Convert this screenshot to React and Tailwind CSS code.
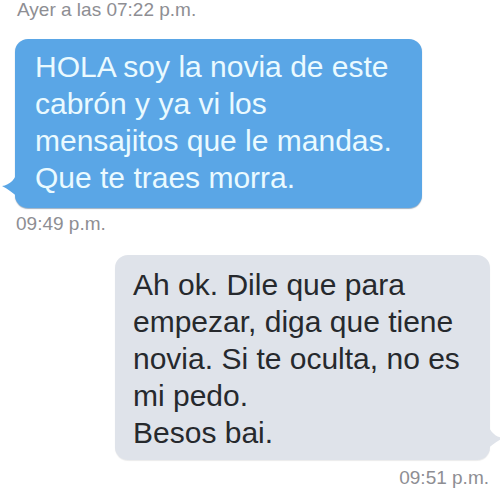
import React from 'react';

const font = { fontFamily: '"Liberation Sans", Arial, sans-serif' };

export default function App() {
  return (
    <div className="w-[500px] h-[500px] bg-white overflow-hidden" style={font}>
      {/* day header */}
      <div className="pl-[17px] text-[19px] leading-[19px] text-[#8e8e93]">
        Ayer a las 07:22 p.m.
      </div>

      {/* incoming bubble */}
      <div className="relative ml-[15px] mt-[20px] w-[407px] rounded-[13px] bg-[#5aa6e6] pl-[20px] pr-[8px] pt-[9px] pb-[12px] shadow-[0_1px_1px_rgba(40,80,120,0.45)]">
        <svg className="absolute left-[-13px] top-[130px]" width="16" height="28" viewBox="0 0 16 28">
          <path d="M16 0 C14 10 8 16 0 17 C6 20 12 25 16 28 Z" fill="#5aa6e6" />
        </svg>
        <p className="text-[30px] leading-[37px] text-[#eafaff] whitespace-nowrap">
          HOLA soy la novia de este<br />
          cabrón y ya vi los<br />
          mensajitos que le mandas.<br />
          Que te traes morra.
        </p>
      </div>
      <div className="pl-[16px] mt-[5px] text-[19px] leading-[22px] text-[#8e8e93]">09:49 p.m.</div>

      {/* outgoing bubble */}
      <div className="relative ml-[115px] mt-[20px] w-[375px] rounded-[13px] bg-[#dfe3ea] pl-[18px] pr-[8px] pt-[11px] pb-[9px] shadow-[0_1px_1px_rgba(0,0,0,0.08)]">
        <svg className="absolute right-[-13px] top-[166px]" width="16" height="28" viewBox="0 0 16 28">
          <path d="M0 0 C2 10 8 16 16 17 C10 20 4 25 0 28 Z" fill="#dfe3ea" />
        </svg>
        <p className="text-[30px] leading-[37px] text-[#26292d] whitespace-nowrap">
          Ah ok. Dile que para<br />
          empezar, diga que tiene<br />
          novia. Si te oculta, no es<br />
          mi pedo.<br />
          Besos bai.
        </p>
      </div>
      <div className="pr-[11px] mt-[7px] text-right text-[19px] leading-[22px] text-[#8e8e93]">09:51 p.m.</div>
    </div>
  );
}
